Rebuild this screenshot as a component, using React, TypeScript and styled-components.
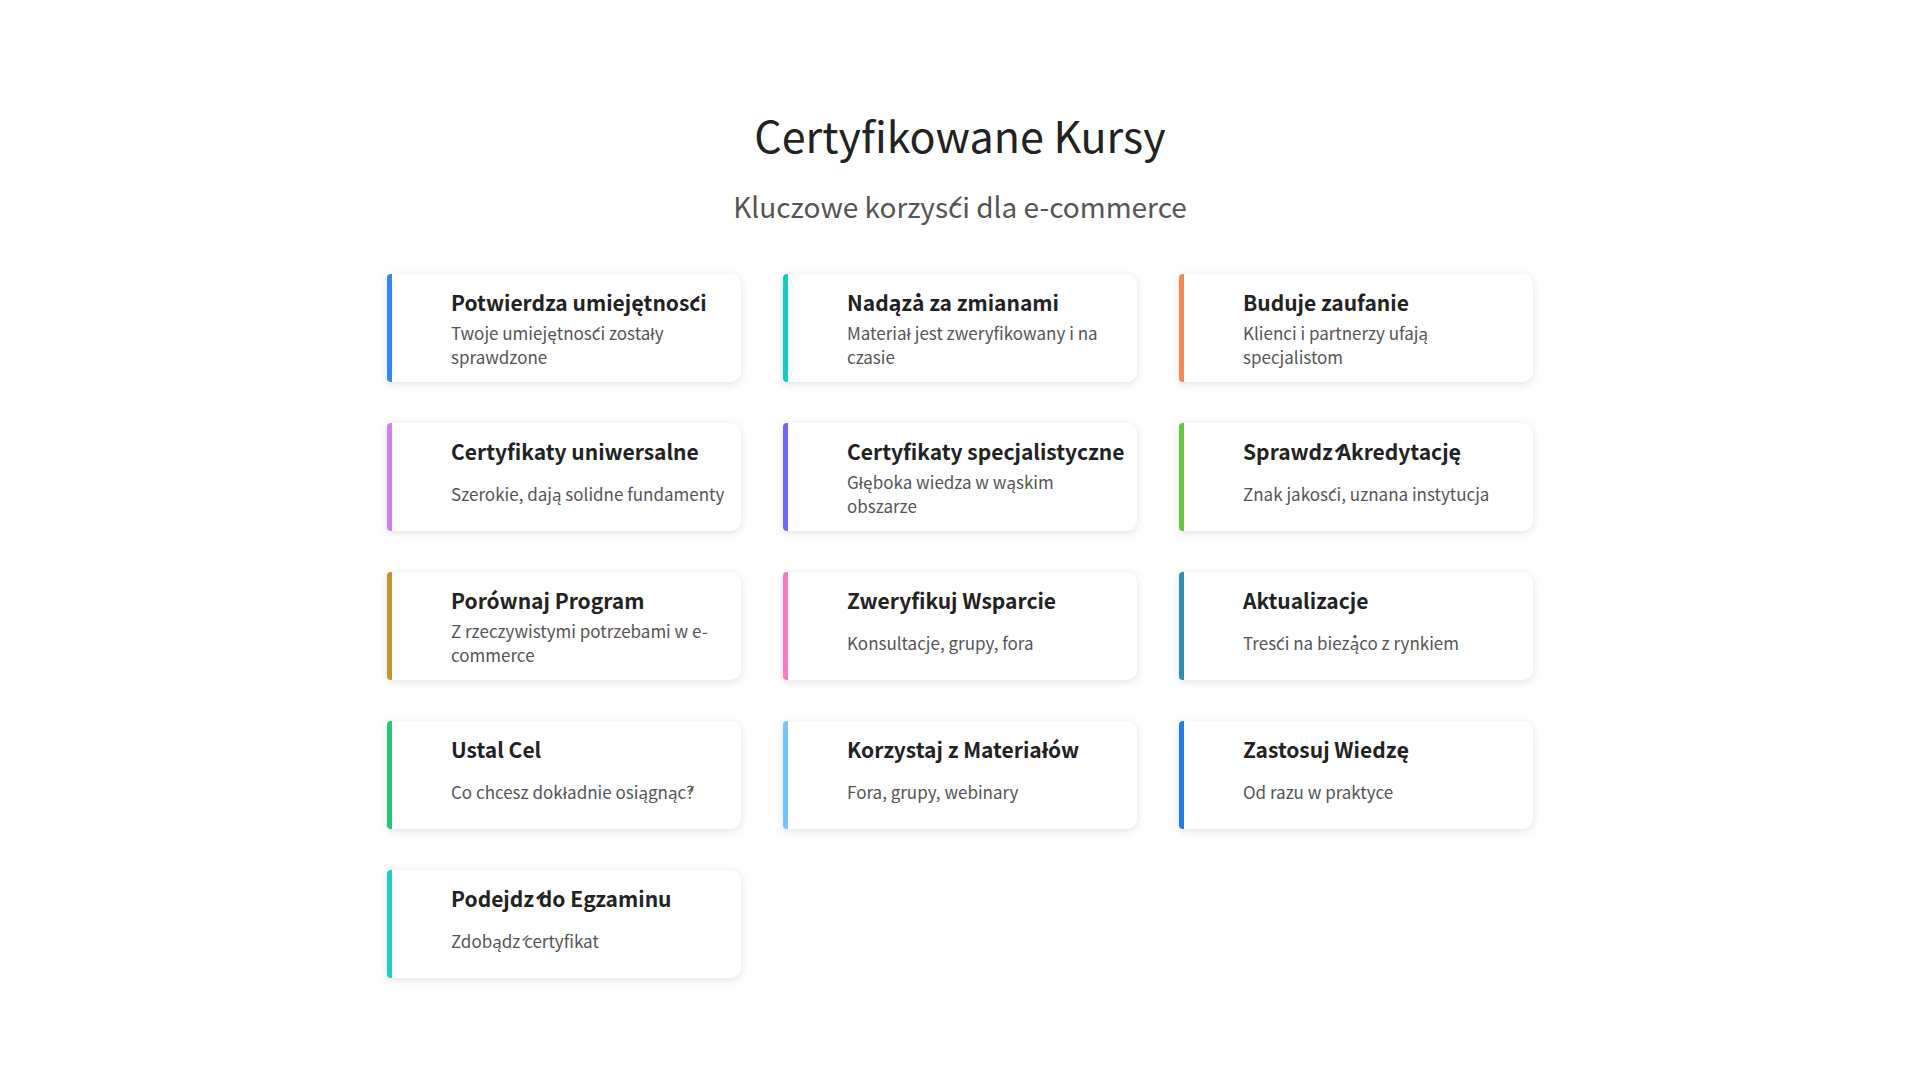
import React from "react";
import styled, { createGlobalStyle } from "styled-components";

const Global = createGlobalStyle`
  body { margin: 0; background: #fff; font-family: "Noto Sans CJK SC", "Noto Sans", sans-serif; }
`;

const Page = styled.div`
  width: 1920px;
  min-height: 1080px;
  display: flex;
  flex-direction: column;
  align-items: center;
  padding-top: 102px;
  box-sizing: border-box;
`;

const Title = styled.h1`
  margin: 0;
  font-size: 43px;
  font-weight: 400;
  color: #222;
  line-height: 64px;
`;

const Subtitle = styled.h2`
  margin: 20px 0 0;
  font-size: 28px;
  font-weight: 400;
  color: #555;
  line-height: 40px;
`;

const Grid = styled.div`
  margin-top: 48px;
  display: grid;
  grid-template-columns: repeat(3, 354px);
  grid-auto-rows: 108px;
  column-gap: 42px;
  row-gap: 41px;
`;

const Card = styled.div<{ $c: string }>`
  background: #fff;
  border-left: 5px solid ${(p) => p.$c};
  border-radius: 4px 10px 10px 4px;
  box-shadow: 0 2px 8px rgba(0, 0, 0, 0.12);
  padding: 12px 10px 10px 59px;
  display: flex;
  flex-direction: column;
  box-sizing: border-box;
`;

const CardTitle = styled.div`
  font-size: 21px;
  font-weight: 700;
  color: #222;
  line-height: 32px;
  white-space: nowrap;
`;

const CardDesc = styled.div`
  flex: 1;
  display: flex;
  align-items: center;
  font-size: 17px;
  color: #555;
  line-height: 24px;
`;

const items = [
  ["Potwierdza umiejętności", "Twoje umiejętności zostały sprawdzone", "#2f86f6"],
  ["Nadąża za zmianami", "Materiał jest zweryfikowany i na czasie", "#1cc9bf"],
  ["Buduje zaufanie", "Klienci i partnerzy ufają specjalistom", "#f3894f"],
  ["Certyfikaty uniwersalne", "Szerokie, dają solidne fundamenty", "#d07ef5"],
  ["Certyfikaty specjalistyczne", "Głęboka wiedza w wąskim obszarze", "#7366f2"],
  ["Sprawdź Akredytację", "Znak jakości, uznana instytucja", "#62c83c"],
  ["Porównaj Program", "Z rzeczywistymi potrzebami w e-commerce", "#c49426"],
  ["Zweryfikuj Wsparcie", "Konsultacje, grupy, fora", "#f47cc0"],
  ["Aktualizacje", "Treści na bieżąco z rynkiem", "#2b8fb3"],
  ["Ustal Cel", "Co chcesz dokładnie osiągnąć?", "#1fc777"],
  ["Korzystaj z Materiałów", "Fora, grupy, webinary", "#74c6f7"],
  ["Zastosuj Wiedzę", "Od razu w praktyce", "#1a7ff2"],
  ["Podejdź do Egzaminu", "Zdobądź certyfikat", "#1ccfc4"],
];

export default function App() {
  return (
    <>
      <Global />
      <Page>
        <Title>Certyfikowane Kursy</Title>
        <Subtitle>Kluczowe korzyści dla e-commerce</Subtitle>
        <Grid>
          {items.map(([t, d, c]) => (
            <Card key={t} $c={c}>
              <CardTitle>{t}</CardTitle>
              <CardDesc>{d}</CardDesc>
            </Card>
          ))}
        </Grid>
      </Page>
    </>
  );
}
